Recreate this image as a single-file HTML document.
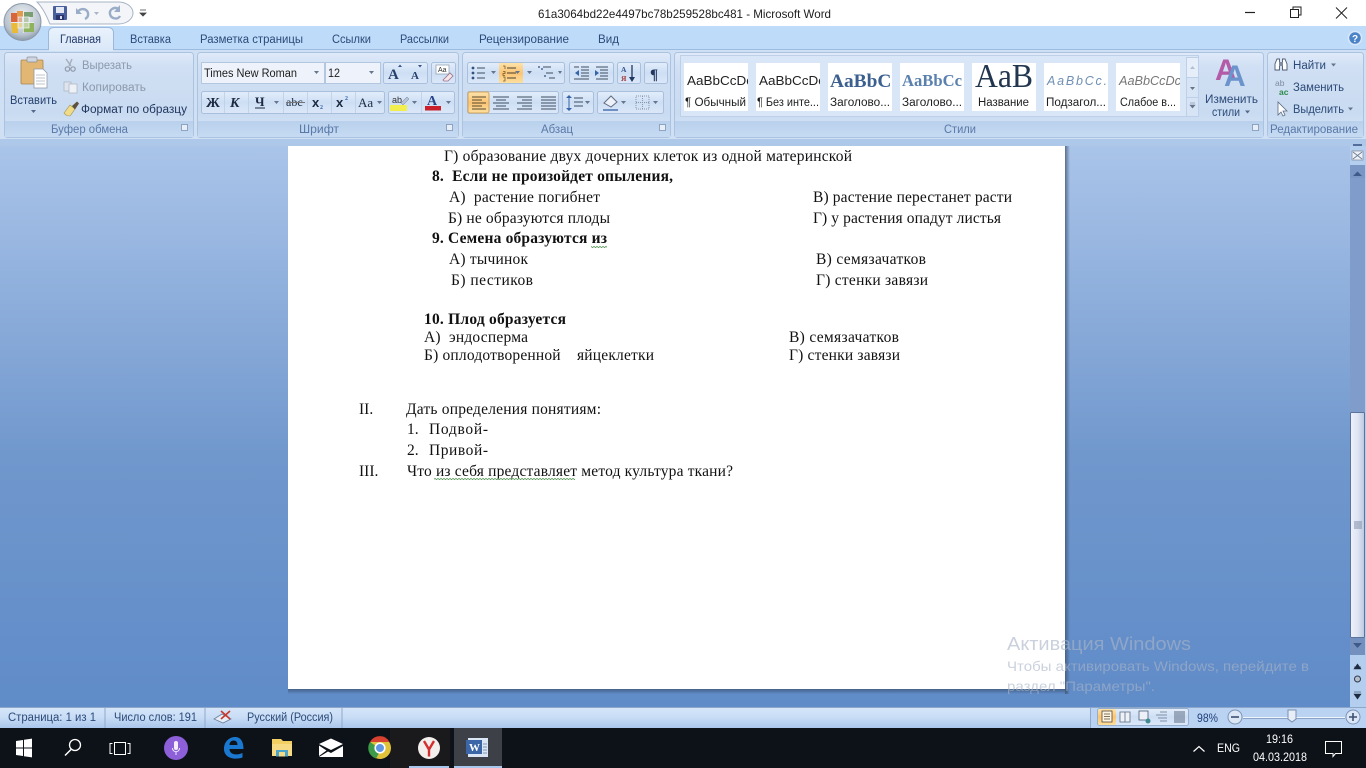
<!DOCTYPE html>
<html lang="ru"><head><meta charset="utf-8"><title>Microsoft Word</title>
<style>
html,body{margin:0;padding:0;width:1366px;height:768px;overflow:hidden;background:#fff}
svg{display:block}
text{white-space:pre}
.u{font-family:"Liberation Sans",sans-serif;font-size:11.5px;fill:#2b4a78}
.k{fill:#1e1e1e}
.g{fill:#8b99ab}
.f{fill:#5a79a8;font-size:11.5px}
.d{font-family:"Liberation Serif",serif;font-size:15.5px;fill:#111}
.b{font-weight:bold}
.s{font-family:"Liberation Serif",serif}
.w{fill:#fff;font-family:"Liberation Sans",sans-serif;font-size:12px}
</style></head><body>
<svg width="1366" height="768" viewBox="0 0 1366 768" xmlns="http://www.w3.org/2000/svg">
<defs>
<linearGradient id="bg" x1="0" y1="0" x2="0" y2="1"><stop offset="0" stop-color="#abc5ea"/><stop offset=".55" stop-color="#7198cd"/><stop offset="1" stop-color="#5f8bc8"/></linearGradient>
<linearGradient id="grp" x1="0" y1="0" x2="0" y2="1"><stop offset="0" stop-color="#dfeafa"/><stop offset=".18" stop-color="#d0dff3"/><stop offset=".72" stop-color="#c9dbf1"/><stop offset="1" stop-color="#d8e8fa"/></linearGradient>
<linearGradient id="ftr" x1="0" y1="0" x2="0" y2="1"><stop offset="0" stop-color="#b9d0ec"/><stop offset="1" stop-color="#c6dbf3"/></linearGradient>
<linearGradient id="btn" x1="0" y1="0" x2="0" y2="1"><stop offset="0" stop-color="#e3eefb"/><stop offset=".5" stop-color="#cddef4"/><stop offset="1" stop-color="#dce8f9"/></linearGradient>
<linearGradient id="act" x1="0" y1="0" x2="0" y2="1"><stop offset="0" stop-color="#fde3ab"/><stop offset=".5" stop-color="#fbc473"/><stop offset="1" stop-color="#fddf9e"/></linearGradient>
<linearGradient id="stat" x1="0" y1="0" x2="0" y2="1"><stop offset="0" stop-color="#d6e6fa"/><stop offset=".5" stop-color="#c8dcf5"/><stop offset="1" stop-color="#a9c6ec"/></linearGradient>
<linearGradient id="tab" x1="0" y1="0" x2="0" y2="1"><stop offset="0" stop-color="#e9f2fd"/><stop offset="1" stop-color="#dbe8f8"/></linearGradient>
<linearGradient id="thumb" x1="0" y1="0" x2="1" y2="0"><stop offset="0" stop-color="#eef2fb"/><stop offset=".5" stop-color="#dfe5f3"/><stop offset="1" stop-color="#bcc8df"/></linearGradient>
<radialGradient id="orb" cx=".5" cy=".35" r=".7"><stop offset="0" stop-color="#f1f3f6"/><stop offset=".7" stop-color="#b8c3cf"/><stop offset="1" stop-color="#7f8d9c"/></radialGradient>
<linearGradient id="shadow" x1="0" y1="0" x2="1" y2="0"><stop offset="0" stop-color="#3d5272" stop-opacity=".75"/><stop offset="1" stop-color="#3d5272" stop-opacity="0"/></linearGradient>
<linearGradient id="shadowb" x1="0" y1="0" x2="0" y2="1"><stop offset="0" stop-color="#3d5272" stop-opacity=".75"/><stop offset="1" stop-color="#3d5272" stop-opacity="0"/></linearGradient>
<pattern id="sq" width="3" height="2" patternUnits="userSpaceOnUse"><path d="M0 .3L1.500 1.700 3 .3" fill="none" stroke="#5b9a5b" stroke-width=".8"/></pattern>
</defs>

<!-- workspace -->
<rect x="0" y="140" width="1366" height="568" fill="url(#bg)"/>
<!-- page -->
<rect x="1065" y="146" width="5" height="548" fill="url(#shadow)"/>
<rect x="288" y="689" width="780" height="5" fill="url(#shadowb)"/>
<rect x="288" y="146" width="777" height="543" fill="#fff"/>

<!-- document text -->
<text class="d" x="444" y="161" textLength="408">Г) образование двух дочерних клеток из одной материнской</text>
<text class="d b" x="432" y="181" textLength="241">8.  Если не произойдет опыления,</text>
<text class="d" x="449" y="202" textLength="151">А)  растение погибнет</text>
<text class="d" x="813" y="202" textLength="199">В) растение перестанет расти</text>
<text class="d" x="448" y="223" textLength="162">Б) не образуются плоды</text>
<text class="d" x="813" y="223" textLength="188">Г) у растения опадут листья</text>
<text class="d b" x="432" y="243" textLength="175">9. Семена образуются из</text>
<text class="d" x="449" y="264" textLength="79">А) тычинок</text>
<text class="d" x="816" y="264" textLength="110">В) семязачатков</text>
<text class="d" x="451" y="285" textLength="82">Б) пестиков</text>
<text class="d" x="816" y="285" textLength="112">Г) стенки завязи</text>
<text class="d b" x="424" y="324" textLength="142">10. Плод образуется</text>
<text class="d" x="424" y="342" textLength="104">А)  эндосперма</text>
<text class="d" x="789" y="342" textLength="110">В) семязачатков</text>
<text class="d" x="424" y="360" textLength="230">Б) оплодотворенной    яйцеклетки</text>
<text class="d" x="789" y="360" textLength="111">Г) стенки завязи</text>
<text class="d" x="359" y="414">II.</text>
<text class="d" x="406" y="414" textLength="195">Дать определения понятиям:</text>
<text class="d" x="407" y="434">1.</text>
<text class="d" x="429" y="434" textLength="59">Подвой-</text>
<text class="d" x="407" y="455">2.</text>
<text class="d" x="429" y="455" textLength="59">Привой-</text>
<text class="d" x="359" y="476">III.</text>
<text class="d" x="407" y="476" textLength="326">Что из себя представляет метод культура ткани?</text>
<rect x="591" y="246" width="16" height="2" fill="url(#sq)"/>
<rect x="434" y="478" width="141" height="2" fill="url(#sq)"/>

<!-- title bar -->
<rect x="0" y="0" width="1366" height="26" fill="#fff"/>
<text class="u k" style="font-size:12px" x="538" y="18" textLength="293" lengthAdjust="spacingAndGlyphs">61a3064bd22e4497bc78b259528bc481 - Microsoft Word</text>
<path d="M37 2H118C128 2 133 8 133 13S128 24 118 24H50C46 15 43 8 37 2Z" fill="#f3f5f8" stroke="#a9b4c4"/>
<rect x="53" y="6" width="14" height="14" rx="1" fill="#4a5f9e"/>
<rect x="56" y="7" width="8" height="6" fill="#e4e8f2"/><rect x="56" y="15" width="8" height="5" fill="#29346a"/><rect x="60" y="16" width="2" height="3" fill="#d9dfee"/>
<path d="M78 12c2-4 9-4 10 1 .6 3-1 5-3 6" fill="none" stroke="#9aadc8" stroke-width="2.400"/><path d="M76 8v6h6z" fill="#9aadc8"/>
<path d="M94 12h5l-2.500 3z" fill="#a9b4c4"/>
<path d="M119 9c-5-3-10 1-9 5 1 5 8 6 10 2" fill="none" stroke="#9aadc8" stroke-width="2.400"/><path d="M120 5v7h-6z" fill="#9aadc8"/>
<path d="M140 10h6M140 13h6l-3 3z" fill="#444" stroke="#444" stroke-width=".8"/>
<path d="M1245 12.500h10" stroke="#222" stroke-width="1.200"/>
<path d="M1290.500 9.500h8v8h-8zM1293 9.500V7h8v8h-2.500" fill="#fff" stroke="#222"/>
<path d="M1336 7.500l11 11M1347 7.500l-11 11" stroke="#222"/>

<!-- tabs row -->
<rect x="0" y="26" width="1366" height="24" fill="#bfdbfa"/>
<rect x="0" y="49" width="1366" height="1" fill="#9dbbdf"/>
<!-- ribbon -->
<rect x="0" y="50" width="1366" height="90" fill="#cfe0f5"/>
<rect x="0" y="139" width="1366" height="7" fill="#aec8ea"/>
<path d="M48.500 50V33q0-5.500 5.500-5.500h54q5.500 0 5.500 5.500v17" fill="url(#tab)" stroke="#9db8d9"/>
<rect x="49" y="48" width="64" height="3" fill="#dbe8f8"/>
<text class="u" x="60" y="43" textLength="41" lengthAdjust="spacingAndGlyphs" style="fill:#20386a">Главная</text>
<text class="u" x="130" y="43" textLength="41" lengthAdjust="spacingAndGlyphs">Вставка</text>
<text class="u" x="200" y="43" textLength="103" lengthAdjust="spacingAndGlyphs">Разметка страницы</text>
<text class="u" x="332" y="43" textLength="39" lengthAdjust="spacingAndGlyphs">Ссылки</text>
<text class="u" x="400" y="43" textLength="49" lengthAdjust="spacingAndGlyphs">Рассылки</text>
<text class="u" x="479" y="43" textLength="90" lengthAdjust="spacingAndGlyphs">Рецензирование</text>
<text class="u" x="598" y="43" textLength="21" lengthAdjust="spacingAndGlyphs">Вид</text>
<circle cx="1355" cy="38" r="6.500" fill="#4b83c8" stroke="#dbe8f8" stroke-width="1.500"/>
<text x="1352" y="42" style="font:bold 10px 'Liberation Sans',sans-serif;fill:#fff">?</text>

<!-- office orb -->
<circle cx="22.500" cy="22" r="18.500" fill="url(#orb)" stroke="#8a98a8"/>
<path d="M11 13h6v4h5v5H11z" fill="#d8663a"/>
<path d="M17 11h6v6h-6z" fill="#e39a4a"/>
<path d="M24 12h9v5h-4v5h-5z" fill="#7a9e72"/>
<path d="M11 23h11v5h-4v5h-6z" fill="#e9b93a"/>
<path d="M23 23h5v-0h6v9H23z" fill="#8fb35a"/>
<path d="M18 17h11v11H18z" fill="#e6ebdf" fill-opacity=".55" stroke="#f2f2f2" stroke-width=".8"/>
<path d="M23.500 11v22M11 22.500h23" stroke="#eef1f3" stroke-width=".7"/>

<!-- groups -->
<g stroke="#abc3df" stroke-width="1">
<rect x="4.500" y="52.500" width="189" height="85" rx="3" fill="url(#grp)"/>
<rect x="197.500" y="52.500" width="261" height="85" rx="3" fill="url(#grp)"/>
<rect x="462.500" y="52.500" width="208" height="85" rx="3" fill="url(#grp)"/>
<rect x="674.500" y="52.500" width="589" height="85" rx="3" fill="url(#grp)"/>
<rect x="1267.500" y="52.500" width="96" height="85" rx="3" fill="url(#grp)"/>
</g>
<g fill="url(#ftr)">
<rect x="5" y="121" width="188" height="16"/><rect x="198" y="121" width="260" height="16"/><rect x="463" y="121" width="207" height="16"/><rect x="675" y="121" width="588" height="16"/><rect x="1268" y="121" width="95" height="16"/>
</g>
<text class="u f" x="51" y="133" textLength="77" lengthAdjust="spacingAndGlyphs">Буфер обмена</text>
<text class="u f" x="299" y="133" textLength="40" lengthAdjust="spacingAndGlyphs">Шрифт</text>
<text class="u f" x="541" y="133" textLength="32" lengthAdjust="spacingAndGlyphs">Абзац</text>
<text class="u f" x="944" y="133" textLength="32" lengthAdjust="spacingAndGlyphs">Стили</text>
<text class="u f" x="1270" y="133" textLength="88" lengthAdjust="spacingAndGlyphs">Редактирование</text>
<g fill="#e8eef7" stroke="#7d94b4" stroke-width=".8">
<rect x="181.500" y="124.500" width="6" height="6"/><rect x="446.500" y="124.500" width="6" height="6"/><rect x="659.500" y="124.500" width="6" height="6"/><rect x="1252.500" y="124.500" width="6" height="6"/>
</g>

<!-- clipboard -->
<rect x="21" y="60" width="22" height="24" rx="1" fill="#e2b673" stroke="#a9854f" stroke-width=".8"/>
<rect x="27" y="57" width="10" height="5" rx="1" fill="#cfd6e2" stroke="#8b8f98" stroke-width=".7"/>
<path d="M34 69h9l4 4v15H34z" fill="#fff" stroke="#8e98a8" stroke-width=".8"/>
<path d="M36 75h9M36 78h9M36 81h9M36 84h9" stroke="#a9b1bf" stroke-width=".8"/>
<text class="u k" style="fill:#24406e" x="10" y="104" textLength="47" lengthAdjust="spacingAndGlyphs">Вставить</text>
<path d="M31 110h5l-2.500 3z" fill="#54688a"/>
<path d="M72 59l-3 7M66 59l5 7" stroke="#a3adbb" stroke-width="1.400"/><circle cx="67.500" cy="69" r="2.200" fill="none" stroke="#8f9aab" stroke-width="1.200"/><circle cx="73" cy="69" r="2.200" fill="none" stroke="#8f9aab" stroke-width="1.200"/>
<text class="u g" x="82" y="69" textLength="50" lengthAdjust="spacingAndGlyphs">Вырезать</text>
<rect x="64" y="82" width="7" height="9" fill="#dfe5ee" stroke="#a8b2c0" stroke-width=".7"/><rect x="69" y="84" width="8" height="9" fill="#eef1f6" stroke="#a8b2c0" stroke-width=".7"/>
<text class="u g" x="82" y="91" textLength="64" lengthAdjust="spacingAndGlyphs">Копировать</text>
<path d="M64 113l6-8 5 4-5 7q-4 0-6-3z" fill="#f0dc88" stroke="#a08d4d" stroke-width=".6"/><path d="M72 106l5-4.500 2 2-4 6z" fill="#5f5040"/>
<text class="u" style="fill:#22375f" x="81" y="113" textLength="106" lengthAdjust="spacingAndGlyphs">Формат по образцу</text>

<!-- font group -->
<rect x="201.500" y="62.500" width="123" height="21" fill="#eef3fb" stroke="#b3c7e0"/>
<rect x="325.500" y="62.500" width="55" height="21" fill="#eef3fb" stroke="#b3c7e0"/>
<text class="u k" x="204" y="77" textLength="93" lengthAdjust="spacingAndGlyphs">Times New Roman</text>
<text class="u k" x="328" y="77" textLength="12" lengthAdjust="spacingAndGlyphs">12</text>
<path d="M314 71h5l-2.500 3zM369 71h5l-2.500 3z" fill="#66758d"/>
<rect x="383.500" y="62.500" width="44" height="21" rx="2" fill="url(#btn)" stroke="#a9c0dc"/>
<text class="s" x="388" y="79" style="font-size:15px;font-weight:bold;fill:#26406b">A</text>
<text class="s" x="411" y="79" style="font-size:11px;font-weight:bold;fill:#26406b">A</text>
<path d="M398 67h4l-2-2.500zM418 65h4l-2 2.500z" fill="#35558a"/>
<rect x="431.500" y="62.500" width="24" height="21" rx="2" fill="url(#btn)" stroke="#a9c0dc"/>
<rect x="436" y="65" width="13" height="9" fill="#fff" stroke="#8b99ab" stroke-width=".7"/>
<text x="438" y="72" style="font:7px 'Liberation Sans',sans-serif;fill:#333">Aa</text>
<path d="M443 80l7-7 3 3-5 5h-4z" fill="#f7e6e8" stroke="#98708b" stroke-width=".8"/>

<rect x="201.500" y="91.500" width="183" height="22" rx="2" fill="url(#btn)" stroke="#a9c0dc"/>
<rect x="388.500" y="91.500" width="66" height="22" rx="2" fill="url(#btn)" stroke="#a9c0dc"/>
<g stroke="#bccfe6" stroke-width=".8"><path d="M224.500 92v21M248.500 92v21M283.500 92v21M307.500 92v21M331.500 92v21M355.500 92v21M421.500 92v21"/></g>
<g class="s" style="font-family:'Liberation Serif',serif;font-weight:bold;fill:#1d2a42">
<text x="206" y="107" style="font-size:14px">Ж</text>
<text x="230" y="107" style="font-size:14px;font-style:italic">К</text>
<text x="255" y="106" style="font-size:13px">Ч</text>
<text x="286" y="106" style="font-size:12px;font-weight:normal">abc</text>
<text x="312" y="107" style="font-size:13px;font-family:'Liberation Sans',sans-serif">x</text>
<text x="320" y="109" style="font-size:6px;fill:#3a67a8">2</text>
<text x="336" y="107" style="font-size:13px;font-family:'Liberation Sans',sans-serif">x</text>
<text x="345" y="100" style="font-size:6px;fill:#3a67a8">2</text>
<text x="358" y="107" style="font-size:13px;font-weight:normal">Aa</text>
</g>
<path d="M255 108h10" stroke="#1d2a42"/><path d="M286 102.500h19" stroke="#777"/>
<path d="M274 101h5l-2.500 3zM377 101h5l-2.500 3zM412 101h5l-2.500 3zM446 101h5l-2.500 3z" fill="#66758d"/>
<text x="392" y="103" style="font:9px 'Liberation Sans',sans-serif;fill:#333">ab</text>
<path d="M401 103l6-6 2 2-6 6z" fill="#b9c3d6" stroke="#6f7f99" stroke-width=".5"/>
<rect x="390" y="105" width="17" height="6" fill="#f2ee4d"/>
<text class="s" x="427" y="105" style="font-size:14px;font-weight:bold;fill:#27468a">A</text>
<rect x="425" y="106" width="16" height="4.500" fill="#c9202c"/>

<!-- paragraph group -->
<g fill="url(#btn)" stroke="#a9c0dc">
<rect x="467.500" y="62.500" width="97" height="21" rx="2"/>
<rect x="569.500" y="62.500" width="44" height="21" rx="2"/>
<rect x="617.500" y="62.500" width="23" height="21" rx="2"/>
<rect x="644.500" y="62.500" width="23" height="21" rx="2"/>
<rect x="467.500" y="91.500" width="91" height="22" rx="2"/>
<rect x="562.500" y="91.500" width="31" height="22" rx="2"/>
<rect x="597.500" y="91.500" width="66" height="22" rx="2"/>
</g>
<rect x="499" y="63" width="24" height="20" fill="url(#act)"/>
<rect x="468" y="92" width="21" height="21" rx="2" fill="url(#act)" stroke="#d1a35b"/>
<!-- list icons -->
<g fill="#33507f"><circle cx="473" cy="68" r="1.400"/><circle cx="473" cy="73" r="1.400"/><circle cx="473" cy="78" r="1.400"/></g>
<path d="M477 68h8M477 73h8M477 78h8" stroke="#3f4d62"/>
<path d="M491 71h5l-2.500 3zM515 71h5l-2.500 3zM527 71h5l-2.500 3zM558 71h4l-2 3z" fill="#66758d"/>
<path d="M503 66h2v3M503 71.500h2v2h-2v2h2M503 77h2v4h-2" fill="none" stroke="#7a5d2c" stroke-width=".8"/>
<path d="M507 68h9M507 73h9M507 78h9" stroke="#4b4030"/>
<path d="M538 67h2M541 69h2M544 76h2" stroke="#33507f" stroke-width="1.200"/>
<path d="M543 67h8M546 73h7M549 78h6" stroke="#3f4d62"/>
<path d="M581 67h8M581 70h8M581 73h8M581 76h8M574 79h15" stroke="#3f4d62"/><path d="M579 70l-4 3 4 3z" fill="#3565a8"/><path d="M574 67h5" stroke="#3f4d62"/>
<path d="M596 67h12M600 70h8M600 73h8M600 76h8M596 79h12" stroke="#3f4d62"/><path d="M595 70l4 3-4 3z" fill="#3565a8"/>
<text x="621" y="72" style="font:bold 7.500px 'Liberation Serif',serif;fill:#35558a">А</text>
<text x="621" y="81" style="font:bold 7.500px 'Liberation Serif',serif;fill:#a33a3a">Я</text>
<path d="M632 65v15" stroke="#22375f" stroke-width="1.300"/><path d="M629 77h6l-3 5z" fill="#22375f"/>
<text x="650" y="79" style="font:bold 15px 'Liberation Serif',serif;fill:#22375f">¶</text>
<!-- align -->
<path d="M472 97h14M472 100h10M472 103h14M472 106h10M472 109h14" stroke="#5a4a2f"/>
<path d="M493 97h16M496 100h10M493 103h16M496 106h10M493 109h16" stroke="#3f4d62"/>
<path d="M517 97h15M522 100h10M517 103h15M522 106h10M517 109h15" stroke="#3f4d62"/>
<path d="M541 97h15M541 100h15M541 103h15M541 106h15M541 109h15" stroke="#3f4d62"/>
<path d="M569 97v12" stroke="#3565a8"/><path d="M566 98l3-3 3 3zM566 108l3 3 3-3z" fill="#3565a8"/>
<path d="M574 98h9M574 102h9M574 106h9" stroke="#3f4d62"/><path d="M585 101h5l-2.500 3z" fill="#66758d"/>
<path d="M604 103l7-7 6 6-6 5z" fill="#eef1f7" stroke="#5f6e85"/><path d="M603 110h15" stroke="#6e8fc2" stroke-width="2"/>
<path d="M621 101h5l-2.500 3zM653 101h5l-2.500 3z" fill="#66758d"/>
<rect x="636" y="96" width="13" height="13" fill="none" stroke="#8696ad" stroke-dasharray="1 1"/><path d="M642.500 96v13M636 102.500h13" stroke="#8696ad" stroke-dasharray="1 1"/>

<!-- styles gallery -->
<rect x="680.500" y="55.500" width="518" height="61" fill="#d9e6f7" stroke="#bdd0e8"/>
<g fill="#fff">
<rect x="684" y="63" width="64" height="48"/><rect x="756" y="63" width="64" height="48"/><rect x="828" y="63" width="64" height="48"/><rect x="900" y="63" width="64" height="48"/><rect x="972" y="63" width="64" height="48"/><rect x="1044" y="63" width="64" height="48"/><rect x="1116" y="63" width="64" height="48"/>
</g>
<svg x="684" y="63" width="64" height="48"><text x="3" y="22" style="font:12.500px 'Liberation Sans',sans-serif;fill:#222" textLength="66" lengthAdjust="spacingAndGlyphs">AaBbCcDc</text><text x="1" y="43" class="u k" textLength="61" lengthAdjust="spacingAndGlyphs">¶ Обычный</text></svg>
<svg x="756" y="63" width="64" height="48"><text x="3" y="22" style="font:12.500px 'Liberation Sans',sans-serif;fill:#222" textLength="66" lengthAdjust="spacingAndGlyphs">AaBbCcDc</text><text x="1" y="43" class="u k" textLength="62" lengthAdjust="spacingAndGlyphs">¶ Без инте...</text></svg>
<svg x="828" y="63" width="64" height="48"><text x="2" y="24" style="font:bold 19px 'Liberation Serif',serif;fill:#3b5f8f" textLength="70" lengthAdjust="spacingAndGlyphs">AaBbCc</text><text x="2" y="43" class="u k" textLength="60" lengthAdjust="spacingAndGlyphs">Заголово...</text></svg>
<svg x="900" y="63" width="64" height="48"><text x="2" y="23" style="font:bold 17px 'Liberation Serif',serif;fill:#5a80ad" textLength="60" lengthAdjust="spacingAndGlyphs">AaBbCc</text><text x="2" y="43" class="u k" textLength="60" lengthAdjust="spacingAndGlyphs">Заголово...</text></svg>
<svg x="972" y="63" width="64" height="48"><text x="3" y="24" style="font:34px 'Liberation Serif',serif;fill:#22364f" textLength="58" lengthAdjust="spacingAndGlyphs">AaB</text><text x="6" y="43" class="u k" textLength="51" lengthAdjust="spacingAndGlyphs">Название</text></svg>
<svg x="1044" y="63" width="64" height="48"><text x="3" y="22" style="font:italic 12.500px 'Liberation Sans',sans-serif;fill:#6f8fb5" textLength="60">AaBbCc.</text><text x="2" y="43" class="u k" textLength="60" lengthAdjust="spacingAndGlyphs">Подзагол...</text></svg>
<svg x="1116" y="63" width="64" height="48"><text x="3" y="22" style="font:italic 13px 'Liberation Sans',sans-serif;fill:#777" textLength="62" lengthAdjust="spacingAndGlyphs">AaBbCcDc</text><text x="4" y="43" class="u k" textLength="56" lengthAdjust="spacingAndGlyphs">Слабое в...</text></svg>
<rect x="1186.500" y="57.500" width="12" height="20" fill="#e6eef9" stroke="#bdd0e8"/>
<rect x="1186.500" y="77.500" width="12" height="20" fill="#d7e4f5" stroke="#bdd0e8"/>
<rect x="1186.500" y="97.500" width="12" height="19" fill="#d7e4f5" stroke="#bdd0e8"/>
<path d="M1190 69h5l-2.500-3z" fill="#b1bfd3"/><path d="M1190 87h5l-2.500 3z" fill="#66758d"/><path d="M1190 103h5M1190 105h5l-2.500 3z" stroke="#66758d" stroke-width=".6" fill="#66758d"/>
<text x="1215" y="80" style="font:bold 30px 'Liberation Sans',sans-serif;fill:#b45ba8">A</text>
<text x="1224" y="86" style="font:bold 30px 'Liberation Sans',sans-serif;fill:#6b93cc">A</text>
<text class="u" x="1205" y="103" textLength="53" lengthAdjust="spacingAndGlyphs">Изменить</text>
<text class="u" x="1212" y="116" textLength="28" lengthAdjust="spacingAndGlyphs">стили</text>
<path d="M1245 110.500h5l-2.500 3z" fill="#54688a"/>

<!-- editing -->
<path d="M1275 70v-6l2-5h2.500v11zM1282.500 70V59h2.500l2 5v6z" fill="#fff" stroke="#4d5a70" stroke-width=".9"/><rect x="1279" y="62" width="4" height="4" fill="#7e8ba0"/>
<text class="u" x="1293" y="69" textLength="33" lengthAdjust="spacingAndGlyphs">Найти</text><path d="M1331 63.500h5l-2.500 3z" fill="#66758d"/>
<text x="1275" y="86" style="font:8.500px 'Liberation Sans',sans-serif;fill:#7e8ba0">ab</text>
<text x="1279" y="95" style="font:bold 8.500px 'Liberation Sans',sans-serif;fill:#2c8a4a">ac</text>
<text class="u" x="1293" y="91" textLength="51" lengthAdjust="spacingAndGlyphs">Заменить</text>
<path d="M1278 102v13l3-3 2 4 2-1-2-4h4z" fill="#fff" stroke="#5e6b80" stroke-width=".8"/>
<text class="u" x="1293" y="113" textLength="51" lengthAdjust="spacingAndGlyphs">Выделить</text><path d="M1348 107.500h5l-2.500 3z" fill="#66758d"/>

<!-- scrollbar -->
<rect x="1350" y="146" width="16" height="561" fill="#b4cef0"/>
<rect x="1350" y="165" width="15" height="490" fill="#7f9ccb"/>
<rect x="1350" y="165" width="15" height="13" fill="#7a96c4"/>
<path d="M1353 176h9l-4.500-4.500z" fill="#3f5a8a"/>
<path d="M1353 145h9" stroke="#33507f" stroke-width="1.500"/>
<rect x="1352" y="151" width="11" height="9" fill="#eef2f8" stroke="#7a8599" stroke-width=".7"/><path d="M1353 152l9 7M1362 152l-9 7" stroke="#6a7990" stroke-width=".8"/>
<rect x="1350.500" y="412.500" width="14" height="225" rx="1" fill="url(#thumb)" stroke="#5c749c"/>
<path d="M1354 522h8M1354 524h8M1354 526h8M1354 528h8" stroke="#7f8da6"/>
<rect x="1350" y="638" width="15" height="17" fill="#7490bf"/>
<path d="M1353 643h9l-4.500 5z" fill="#3f5a8a"/>
<rect x="1350" y="655" width="16" height="52" fill="#b4cef0"/>
<path d="M1354 667h7M1354 669h7l-3.500-5z" fill="#1e2b40" stroke="#1e2b40" stroke-width=".6"/>
<circle cx="1357.500" cy="679" r="3" fill="#b7bec9" stroke="#2c3a50"/>
<path d="M1354 692h7M1354 694h7l-3.500 5z" fill="#1e2b40" stroke="#1e2b40" stroke-width=".6"/>

<!-- status bar -->
<rect x="0" y="707" width="1366" height="21" fill="url(#stat)"/>
<rect x="0" y="707" width="1366" height="1" fill="#8ea6c7"/>
<rect x="1091" y="708" width="275" height="20" fill="#bad3f2"/>
<path d="M105 708v20M205 708v20M342 708v20M1090.500 708v20" stroke="#8fa9cc"/>
<text class="u" x="8" y="721" textLength="88" lengthAdjust="spacingAndGlyphs">Страница: 1 из 1</text>
<text class="u" x="114" y="721" textLength="83" lengthAdjust="spacingAndGlyphs">Число слов: 191</text>
<text class="u" x="247" y="721" textLength="86" lengthAdjust="spacingAndGlyphs">Русский (Россия)</text>
<path d="M214 719l8-5 9 5-8 4z" fill="#e6edf7" stroke="#6a7f9e" stroke-width=".8"/>
<path d="M221 711l9 8M230 711l-9 8" stroke="#c63a2e" stroke-width="1.600"/>
<rect x="1097.500" y="708.500" width="91" height="17" rx="2" fill="url(#btn)" stroke="#96aecd"/>
<rect x="1098" y="709" width="18" height="16" rx="2" fill="url(#act)"/>
<rect x="1102" y="711" width="10" height="11" fill="#fff5df" stroke="#55483a" stroke-width=".8"/><path d="M1104 714h6M1104 716.500h6M1104 719h6" stroke="#55483a" stroke-width=".7"/>
<path d="M1120 712h5v10h-5zM1125 712h5v10h-5z" fill="#eef2f8" stroke="#5c6a80" stroke-width=".8"/>
<rect x="1139" y="711" width="9" height="9" fill="#eef2f8" stroke="#4a5c78" stroke-width=".8"/><circle cx="1148" cy="721" r="2.500" fill="#3e8a90"/>
<path d="M1160 712h7M1156 715h11M1158 718h9M1160 721h7" stroke="#66748a" stroke-width=".8"/>
<path d="M1174 712h11M1174 714h11M1174 716h11M1174 718h11M1174 720h11M1174 722h11" stroke="#5c6a80" stroke-width=".9"/>
<text class="u" style="fill:#1f3f78" x="1197" y="722" textLength="21" lengthAdjust="spacingAndGlyphs">98%</text>
<path d="M1243 717.500h102" stroke="#f0f5fc"/><path d="M1243 718.500h102" stroke="#8ba3c6"/>
<circle cx="1235" cy="717" r="7" fill="#dce7f6" stroke="#7b93b6"/><path d="M1231 717h8" stroke="#3d5072" stroke-width="1.600"/>
<circle cx="1353" cy="717" r="7" fill="#dce7f6" stroke="#7b93b6"/><path d="M1349 717h8M1353 713v8" stroke="#3d5072" stroke-width="1.600"/>
<path d="M1288 710h8v9l-4 3-4-3z" fill="#e8eef8" stroke="#7b8fb0"/>

<!-- activation watermark -->
<g style="font-family:'Liberation Sans',sans-serif" fill="#aab5c8" fill-opacity=".62">
<text x="1007" y="650" style="font-size:18.500px" textLength="184" lengthAdjust="spacingAndGlyphs">Активация Windows</text>
<text x="1007" y="671" style="font-size:14px" textLength="302" lengthAdjust="spacingAndGlyphs">Чтобы активировать Windows, перейдите в</text>
<text x="1007" y="691" style="font-size:14px" textLength="148" lengthAdjust="spacingAndGlyphs">раздел "Параметры".</text>
</g>

<!-- taskbar -->
<rect x="0" y="728" width="1366" height="40" fill="#0d1218"/>
<rect x="390" y="728" width="60" height="40" fill="#1a1a1c"/>
<rect x="454" y="728" width="48" height="40" fill="#3d4147"/>
<rect x="409" y="766" width="40" height="2" fill="#a9c6ec"/><rect x="454" y="766" width="48" height="2" fill="#a9c6ec"/>
<!-- win -->
<path d="M16 741l7-1v7.500h-7zM24 739.800l8-1.200v8.900h-8zM16 748.500h7v7.500l-7-1zM24 748.500h8v8.900l-8-1.200z" fill="#fff"/>
<!-- search -->
<circle cx="75" cy="745" r="5.500" fill="none" stroke="#fff" stroke-width="1.300"/><path d="M71 749.500l-6 6" stroke="#fff" stroke-width="1.500"/>
<!-- task view -->
<rect x="114.500" y="742.500" width="11" height="12" fill="none" stroke="#fff"/><path d="M112.500 743.500h-2.500v10h2.500M127.500 743.500h2.500v10h-2.500" fill="none" stroke="#fff"/>
<!-- cortana -->
<circle cx="176" cy="748" r="12" fill="#8d5fd8"/>
<rect x="174" y="741" width="4" height="9" rx="2" fill="#f3edfc"/><path d="M172.500 748c0 5 7 5 7 0M176 752v3" fill="none" stroke="#f3edfc"/>
<!-- edge -->
<path d="M224 749c0-8 6-12 11-12 6 0 8.500 5 8.500 12h-14c0 5 6 7 13 4v4.500c-9 3-18.500 0-18.500-8.500zM229.500 745h8c0-3-1.500-4.500-4-4.500s-4 2-4 4.500z" fill="#1a78d0" fill-rule="evenodd"/>
<!-- explorer -->
<path d="M272 739h9l2 2h9v15h-20z" fill="#f2cf62"/><rect x="272" y="744" width="20" height="12" fill="#f6db84"/>
<rect x="276" y="750" width="12" height="6.500" fill="#4ba4c9"/><rect x="279" y="752" width="6" height="4.500" fill="#f6db84"/>
<!-- mail -->
<path d="M319 744l12-5.500 12 5.500-12 6z" fill="#fff"/><path d="M319 745.500l7.500 5-7.500 5.500zM319 757l9-5.500 3 1.500 12-7v11z" fill="#fff"/>
<!-- chrome -->
<circle cx="380" cy="748" r="11" fill="#e0c13a"/>
<path d="M370 742a11 11 0 0 1 19.500 0H380z" fill="#d8402f"/>
<path d="M370 742a11 11 0 0 0 6 16.500l5-9z" fill="#3d9a48"/>
<circle cx="380" cy="748" r="4.800" fill="#5f97e6" stroke="#fff" stroke-width="1.600"/>
<!-- yandex -->
<circle cx="429" cy="748" r="11" fill="#f2efec"/>
<path d="M424 741l5 8.500 5-8.500M429 749.500v7" fill="none" stroke="#d32f2f" stroke-width="2.400"/>
<!-- word -->
<rect x="468" y="738" width="20" height="19" fill="#dbe6f5"/><rect x="466" y="740" width="16" height="14" fill="#3b66a8"/>
<text x="469" y="751" style="font:bold 11px 'Liberation Serif',serif;fill:#fff">W</text>
<path d="M483 744h4M483 747h4M483 750h4M483 753h4" stroke="#7f94b4"/>
<!-- tray -->
<path d="M1193.500 751.500l5.500-5 5.500 5" fill="none" stroke="#fff" stroke-width="1.200"/>
<text class="w" x="1217" y="752" textLength="23" lengthAdjust="spacingAndGlyphs">ENG</text>
<text class="w" x="1266" y="743" textLength="27" lengthAdjust="spacingAndGlyphs">19:16</text>
<text class="w" x="1253" y="761" textLength="54" lengthAdjust="spacingAndGlyphs">04.03.2018</text>
<path d="M1325.500 741.500h16v12h-6l-2.500 3v-3h-7.500z" fill="none" stroke="#fff"/>
</svg>
</body></html>
